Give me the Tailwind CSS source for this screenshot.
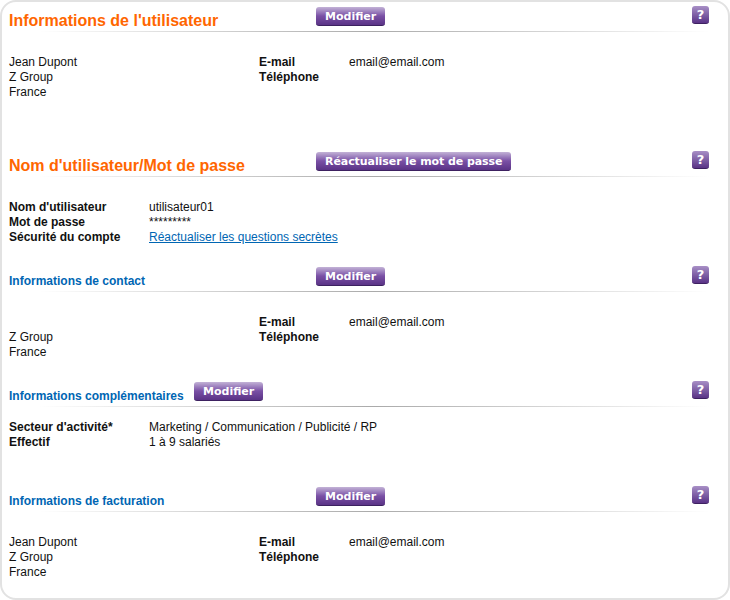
<!DOCTYPE html>
<html lang="fr">
<head>
  <meta charset="UTF-8">
  <title>Informations de l'utilisateur</title>
  <script src="https://cdn.jsdelivr.net/npm/@tailwindcss/browser@4"></script>
</head>
<body class="bg-white font-['Liberation_Sans',Arial,sans-serif] text-[12px] leading-[15px] text-[#111]">
  <div class="h-[600px] w-[730px] overflow-hidden rounded-[16px] border-2 border-[#e2e2e2] pl-[7px] pr-[19px]">

    <!-- Informations de l'utilisateur -->
    <section>
      <div class="relative flex h-[30px] items-start">
        <h2 class="w-[307px] pt-[9px] text-[16px] leading-[20px] font-bold text-[#ff6600]">Informations de l'utilisateur</h2>
        <button class="mt-[5px] h-[19px] rounded-[3px] border-b border-[#3d2160] bg-gradient-to-b from-[#c3b2d6] via-[#7a50a5] to-[#5a3386] px-[9px] font-['DejaVu_Sans',sans-serif] text-[11px] leading-[17px] font-bold text-white">Modifier</button>
        <span class="mt-[4px] ml-auto flex h-[18px] w-[17px] items-center justify-center rounded-[3px] border-b border-[#3d2160] bg-gradient-to-b from-[#a88fc6] to-[#5a3386] font-['DejaVu_Sans',sans-serif] text-[13px] font-bold text-white">?</span>
        <div class="absolute right-[0px] bottom-0 left-[30px] h-px bg-gradient-to-r from-white via-[#aaaaaa] to-white"></div>
      </div>
      <div class="grid grid-cols-[250px_90px_1fr] pt-[23px]">
        <div>Jean Dupont</div><div class="font-bold">E-mail</div><div>email@email.com</div>
        <div>Z Group</div><div class="font-bold">Téléphone</div><div></div>
        <div>France</div>
      </div>
    </section>

    <!-- Nom d'utilisateur/Mot de passe -->
    <section class="mt-[47px]">
      <div class="relative flex h-[30px] items-start">
        <h2 class="w-[307px] pt-[9px] text-[16px] leading-[20px] font-bold text-[#ff6600]">Nom d'utilisateur/Mot de passe</h2>
        <button class="mt-[5px] h-[19px] rounded-[3px] border-b border-[#3d2160] bg-gradient-to-b from-[#c3b2d6] via-[#7a50a5] to-[#5a3386] px-[9px] font-['DejaVu_Sans',sans-serif] text-[11px] leading-[17px] font-bold tracking-[-0.07px] text-white">Réactualiser le mot de passe</button>
        <span class="mt-[4px] ml-auto flex h-[18px] w-[17px] items-center justify-center rounded-[3px] border-b border-[#3d2160] bg-gradient-to-b from-[#a88fc6] to-[#5a3386] font-['DejaVu_Sans',sans-serif] text-[13px] font-bold text-white">?</span>
        <div class="absolute right-[0px] bottom-0 left-[30px] h-px bg-gradient-to-r from-white via-[#aaaaaa] to-white"></div>
      </div>
      <div class="grid grid-cols-[140px_1fr] pt-[23px]">
        <div class="font-bold">Nom d'utilisateur</div><div>utilisateur01</div>
        <div class="font-bold">Mot de passe</div><div>*********</div>
        <div class="font-bold">Sécurité du compte</div><div><a href="#" class="text-[#0066b3] underline">Réactualiser les questions secrètes</a></div>
      </div>
    </section>

    <!-- Informations de contact -->
    <section class="mt-[17px]">
      <div class="relative flex h-[30px] items-start">
        <h3 class="w-[307px] pt-[10px] text-[12px] leading-[18px] font-bold text-[#0066b3]">Informations de contact</h3>
        <button class="mt-[5px] h-[19px] rounded-[3px] border-b border-[#3d2160] bg-gradient-to-b from-[#c3b2d6] via-[#7a50a5] to-[#5a3386] px-[9px] font-['DejaVu_Sans',sans-serif] text-[11px] leading-[17px] font-bold text-white">Modifier</button>
        <span class="mt-[4px] ml-auto flex h-[18px] w-[17px] items-center justify-center rounded-[3px] border-b border-[#3d2160] bg-gradient-to-b from-[#a88fc6] to-[#5a3386] font-['DejaVu_Sans',sans-serif] text-[13px] font-bold text-white">?</span>
        <div class="absolute right-[0px] bottom-0 left-[30px] h-px bg-gradient-to-r from-white via-[#aaaaaa] to-white"></div>
      </div>
      <div class="grid grid-cols-[250px_90px_1fr] pt-[23px]">
        <div></div><div class="font-bold">E-mail</div><div>email@email.com</div>
        <div>Z Group</div><div class="font-bold">Téléphone</div><div></div>
        <div>France</div>
      </div>
    </section>

    <!-- Informations complémentaires -->
    <section class="mt-[17px]">
      <div class="relative flex h-[30px] items-start">
        <h3 class="w-[185px] pt-[10px] text-[12px] leading-[18px] font-bold text-[#0066b3]">Informations complémentaires</h3>
        <button class="mt-[5px] h-[19px] rounded-[3px] border-b border-[#3d2160] bg-gradient-to-b from-[#c3b2d6] via-[#7a50a5] to-[#5a3386] px-[9px] font-['DejaVu_Sans',sans-serif] text-[11px] leading-[17px] font-bold text-white">Modifier</button>
        <span class="mt-[4px] ml-auto flex h-[18px] w-[17px] items-center justify-center rounded-[3px] border-b border-[#3d2160] bg-gradient-to-b from-[#a88fc6] to-[#5a3386] font-['DejaVu_Sans',sans-serif] text-[13px] font-bold text-white">?</span>
        <div class="absolute right-[0px] bottom-0 left-[30px] h-px bg-gradient-to-r from-white via-[#aaaaaa] to-white"></div>
      </div>
      <div class="grid grid-cols-[140px_1fr] pt-[13px]">
        <div class="font-bold">Secteur d'activité*</div><div>Marketing / Communication / Publicité / RP</div>
        <div class="font-bold">Effectif</div><div>1 à 9 salariés</div>
      </div>
    </section>

    <!-- Informations de facturation -->
    <section class="mt-[32px]">
      <div class="relative flex h-[30px] items-start">
        <h3 class="w-[307px] pt-[10px] text-[12px] leading-[18px] font-bold text-[#0066b3]">Informations de facturation</h3>
        <button class="mt-[5px] h-[19px] rounded-[3px] border-b border-[#3d2160] bg-gradient-to-b from-[#c3b2d6] via-[#7a50a5] to-[#5a3386] px-[9px] font-['DejaVu_Sans',sans-serif] text-[11px] leading-[17px] font-bold text-white">Modifier</button>
        <span class="mt-[4px] ml-auto flex h-[18px] w-[17px] items-center justify-center rounded-[3px] border-b border-[#3d2160] bg-gradient-to-b from-[#a88fc6] to-[#5a3386] font-['DejaVu_Sans',sans-serif] text-[13px] font-bold text-white">?</span>
        <div class="absolute right-[0px] bottom-0 left-[30px] h-px bg-gradient-to-r from-white via-[#aaaaaa] to-white"></div>
      </div>
      <div class="grid grid-cols-[250px_90px_1fr] pt-[23px]">
        <div>Jean Dupont</div><div class="font-bold">E-mail</div><div>email@email.com</div>
        <div>Z Group</div><div class="font-bold">Téléphone</div><div></div>
        <div>France</div>
      </div>
    </section>

  </div>
</body>
</html>
